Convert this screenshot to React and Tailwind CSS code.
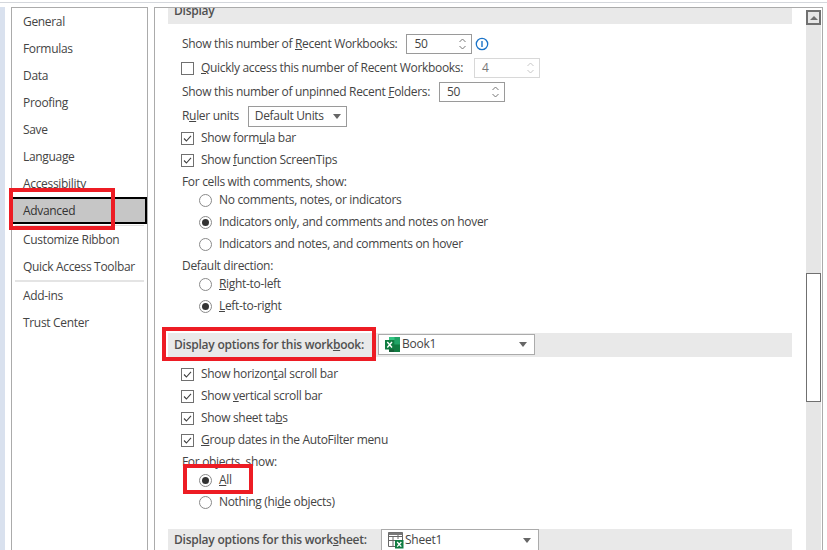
import React from "react";

const Check = () => (
  <span className="w-[13px] h-[13px] border border-[#707070] bg-white flex items-center justify-center shrink-0">
    <svg width="9" height="9" viewBox="0 0 9 9" fill="none"><path d="M1 4.5 L3.4 7 L8 1.8" stroke="#404040" strokeWidth="1.1" /></svg>
  </span>
);
const Box = () => <span className="w-[13px] h-[13px] border border-[#707070] bg-white shrink-0" />;
const Radio = ({ on }) => (
  <span className="w-[13px] h-[13px] rounded-full border border-[#8a8a8a] bg-white flex items-center justify-center shrink-0">
    {on && <span className="w-[7px] h-[7px] rounded-full bg-[#333]" />}
  </span>
);
const Spin = ({ light }) => (
  <svg width="9" height="14" viewBox="0 0 9 14" fill="none" className="shrink-0">
    <path d="M1.5 5 L4.5 2 L7.5 5 M1.5 9 L4.5 12 L7.5 9" stroke={light ? "#c8c8c8" : "#777"} strokeWidth="1" />
  </svg>
);
const Caret = () => <span className="w-0 h-0 border-l-[4px] border-r-[4px] border-t-[5px] border-l-transparent border-r-transparent border-t-[#666] shrink-0" />;
const CheckRow = ({ children }) => (
  <div className="h-[22px] flex items-center gap-[7px] pl-[13px]"><Check /><span>{children}</span></div>
);
const RadioRow = ({ on, children }) => (
  <div className="h-[22px] flex items-center gap-[7px] pl-[31px]"><Radio on={on} /><span>{children}</span></div>
);
const Label = ({ children }) => <div className="h-[18px] pt-[3px] flex items-center pl-[14px]">{children}</div>;
const Spinner = ({ v, light }) => (
  <div className={`w-[66px] h-[20px] border ${light ? "border-[#d8d8d8] text-[#777]" : "border-[#9a9a9a]"} flex items-center justify-between pl-[7px] pr-[4px] bg-white shrink-0`}>
    <span>{v}</span><Spin light={light} />
  </div>
);
const XlBook = () => (
  <svg width="17" height="17" viewBox="0 0 17 17" className="shrink-0">
    <rect x="5" y="1" width="11" height="15" fill="#21a366" />
    <rect x="5" y="1" width="5.5" height="7.5" fill="#33c481" />
    <rect x="10.5" y="8.5" width="5.5" height="7.5" fill="#107c41" />
    <rect x="5" y="8.5" width="5.5" height="7.5" fill="#185c37" />
    <rect x="1" y="4" width="9.5" height="9.5" fill="#107c41" />
    <path d="M3.3 6 L8 11.5 M8 6 L3.3 11.5" stroke="#fff" strokeWidth="1.4" />
  </svg>
);
const XlSheet = () => (
  <svg width="17" height="18" viewBox="0 0 17 18" className="shrink-0">
    <path d="M1.5 1.5 H15.5 V10 M1.5 1.5 V15.5 H8 M1.5 5.5 H15.5 M1.5 9.5 H8 M6 5.5 V15.5 M11 1.5 V8" fill="none" stroke="#666" strokeWidth="1" />
    <rect x="1.5" y="1.5" width="14" height="2.5" fill="#777" />
    <rect x="8" y="9" width="8.5" height="8.5" fill="#107c41" />
    <path d="M10.2 11 L14.3 15.6 M14.3 11 L10.2 15.6" stroke="#fff" strokeWidth="1.3" />
  </svg>
);
const Item = ({ children, sel }) => (
  <div className={`h-[27px] flex items-center ${sel ? "bg-[#c6c6c6] border-2 border-black -ml-px pl-[10px] text-[#333]" : "pl-[11px]"}`}>{children}</div>
);
const Band = ({ children, h }) => (
  <div className={`${h} mr-[14px] ml-[13px] bg-[#e9e9e9] flex items-center pl-[6px] font-semibold tracking-[-0.24px] text-[#505050]`}>{children}</div>
);

export default function App() {
  return (
    <div className="relative w-[827px] h-[550px] overflow-hidden bg-white text-[#444] text-[12px] tracking-[-0.32px] font-['Open_Sans',sans-serif]">
      <div className="h-[3px] border-b border-[#d4d7dc]" />
      <div className="h-[547px] flex pt-[4px]">
        <div className="w-[5px] bg-[#d9e1ee]" />
        <div className="w-[6px]" />
        <aside className="w-[137px] border border-b-0 border-[#ababab]">
          <Item>General</Item>
          <Item>Formulas</Item>
          <Item>Data</Item>
          <Item>Proofing</Item>
          <Item>Save</Item>
          <Item>Language</Item>
          <Item>Accessibility</Item>
          <Item sel>Advanced</Item>
          <div className="h-px mx-[3px] mt-px bg-[#e0e0e0]" />
          <Item>Customize Ribbon</Item>
          <Item>Quick Access Toolbar</Item>
          <div className="h-[2px] mx-[3px] bg-[#e4e4e4]" />
          <Item>Add-ins</Item>
          <Item>Trust Center</Item>
        </aside>
        <div className="w-[6px]" />
        <main className="flex w-[669px] border border-b-0 border-[#ababab] overflow-hidden">
          <div className="flex-1 min-w-0 overflow-hidden">
            <Band h="h-[16px]"><span className="-mt-[10px]">Display</span></Band>
            <div className="h-[8px]" />
            <div className="h-[24px] flex items-center pl-[27px]">
              <span className="mr-[9px]">Show this number of <u>R</u>ecent Workbooks:</span>
              <Spinner v="50" />
              <svg width="14" height="14" viewBox="0 0 14 14" fill="none" className="ml-[3px]"><circle cx="7" cy="7" r="5.7" stroke="#1a73c8" strokeWidth="1.3" /><path d="M7 4 V10" stroke="#1a73c8" strokeWidth="1.4" /></svg>
            </div>
            <div className="h-[24px] flex items-center gap-[7px] pl-[26px]">
              <Box /><span><u>Q</u>uickly access this number of Recent Workbooks:</span>
              <div className="ml-[4px]"><Spinner v="4" light /></div>
            </div>
            <div className="h-[24px] flex items-center pl-[27px] gap-[9px]">
              <span>Show this number of unpinned Recent <u>F</u>olders:</span>
              <Spinner v="50" />
            </div>
            <div className="h-[23px] flex items-center pl-[27px] gap-[9px]">
              <span>R<u>u</u>ler units</span>
              <div className="w-[99px] h-[21px] mt-[1px] border border-[#9a9a9a] flex items-center justify-between pl-[6px] pr-[5px]"><span>Default Units</span><Caret /></div>
            </div>
            <div className="pl-[13px]">
              <CheckRow>Show form<u>u</u>la bar</CheckRow>
              <CheckRow>Show <u>f</u>unction ScreenTips</CheckRow>
              <Label>For cells with comments, show:</Label>
              <RadioRow>No comments, notes, or indicators</RadioRow>
              <RadioRow on>Indicators only, and comments and notes on hover</RadioRow>
              <RadioRow>Indicators and notes, and comments on hover</RadioRow>
              <Label>Default direction:</Label>
              <RadioRow><u>R</u>ight-to-left</RadioRow>
              <RadioRow on><u>L</u>eft-to-right</RadioRow>
            </div>
            <div className="h-[16px]" />
            <Band h="h-[24px]">
              <span className="w-[204px] shrink-0 pb-[1px]">Display options for this work<u>b</u>ook:</span>
              <div className="w-[157px] h-[21px] mb-[2px] border border-[#ababab] bg-white flex items-center justify-between pl-[5px] pr-[7px] font-normal text-[#444]">
                <span className="flex items-center gap-[1px]"><XlBook />Book1</span><Caret />
              </div>
            </Band>
            <div className="h-[6px]" />
            <div className="pl-[13px]">
              <CheckRow>Show horizon<u>t</u>al scroll bar</CheckRow>
              <CheckRow>Show <u>v</u>ertical scroll bar</CheckRow>
              <CheckRow>Show sheet ta<u>b</u>s</CheckRow>
              <CheckRow><u>G</u>roup dates in the AutoFilter menu</CheckRow>
              <Label>For objects, show:</Label>
              <RadioRow on><u>A</u>ll</RadioRow>
              <RadioRow>Nothing (hi<u>d</u>e objects)</RadioRow>
            </div>
            <div className="h-[16px]" />
            <Band h="h-[22px]">
              <span className="w-[207px] shrink-0">Display options for this work<u>s</u>heet:</span>
              <div className="w-[158px] h-[22px] border border-[#ababab] bg-white flex items-center justify-between pl-[5px] pr-[7px] font-normal text-[#444]">
                <span className="flex items-center gap-[1px]"><XlSheet />Sheet1</span><Caret />
              </div>
            </Band>
          </div>
          <div className="w-[15px] mt-[2px] mr-px bg-[#e6e6e6] flex flex-col">
            <div className="h-[15px] border-2 border-[#707070] bg-[#e6e6e6] flex items-center justify-center">
              <span className="w-0 h-0 border-l-[4px] border-r-[4px] border-b-[4px] border-l-transparent border-r-transparent border-b-[#707070]" />
            </div>
            <div className="h-[248px]" />
            <div className="h-[129px] border border-[#707070] bg-white" />
          </div>
        </main>
      </div>
      <div className="absolute left-[9px] top-[188px] w-[106px] h-[42px] border-[4px] border-[#ed1c24]" />
      <div className="absolute left-[162px] top-[327px] w-[214px] h-[34px] border-[4px] border-[#ed1c24]" />
      <div className="absolute left-[183px] top-[464px] w-[70px] h-[30px] border-[4px] border-[#ed1c24]" />
    </div>
  );
}
